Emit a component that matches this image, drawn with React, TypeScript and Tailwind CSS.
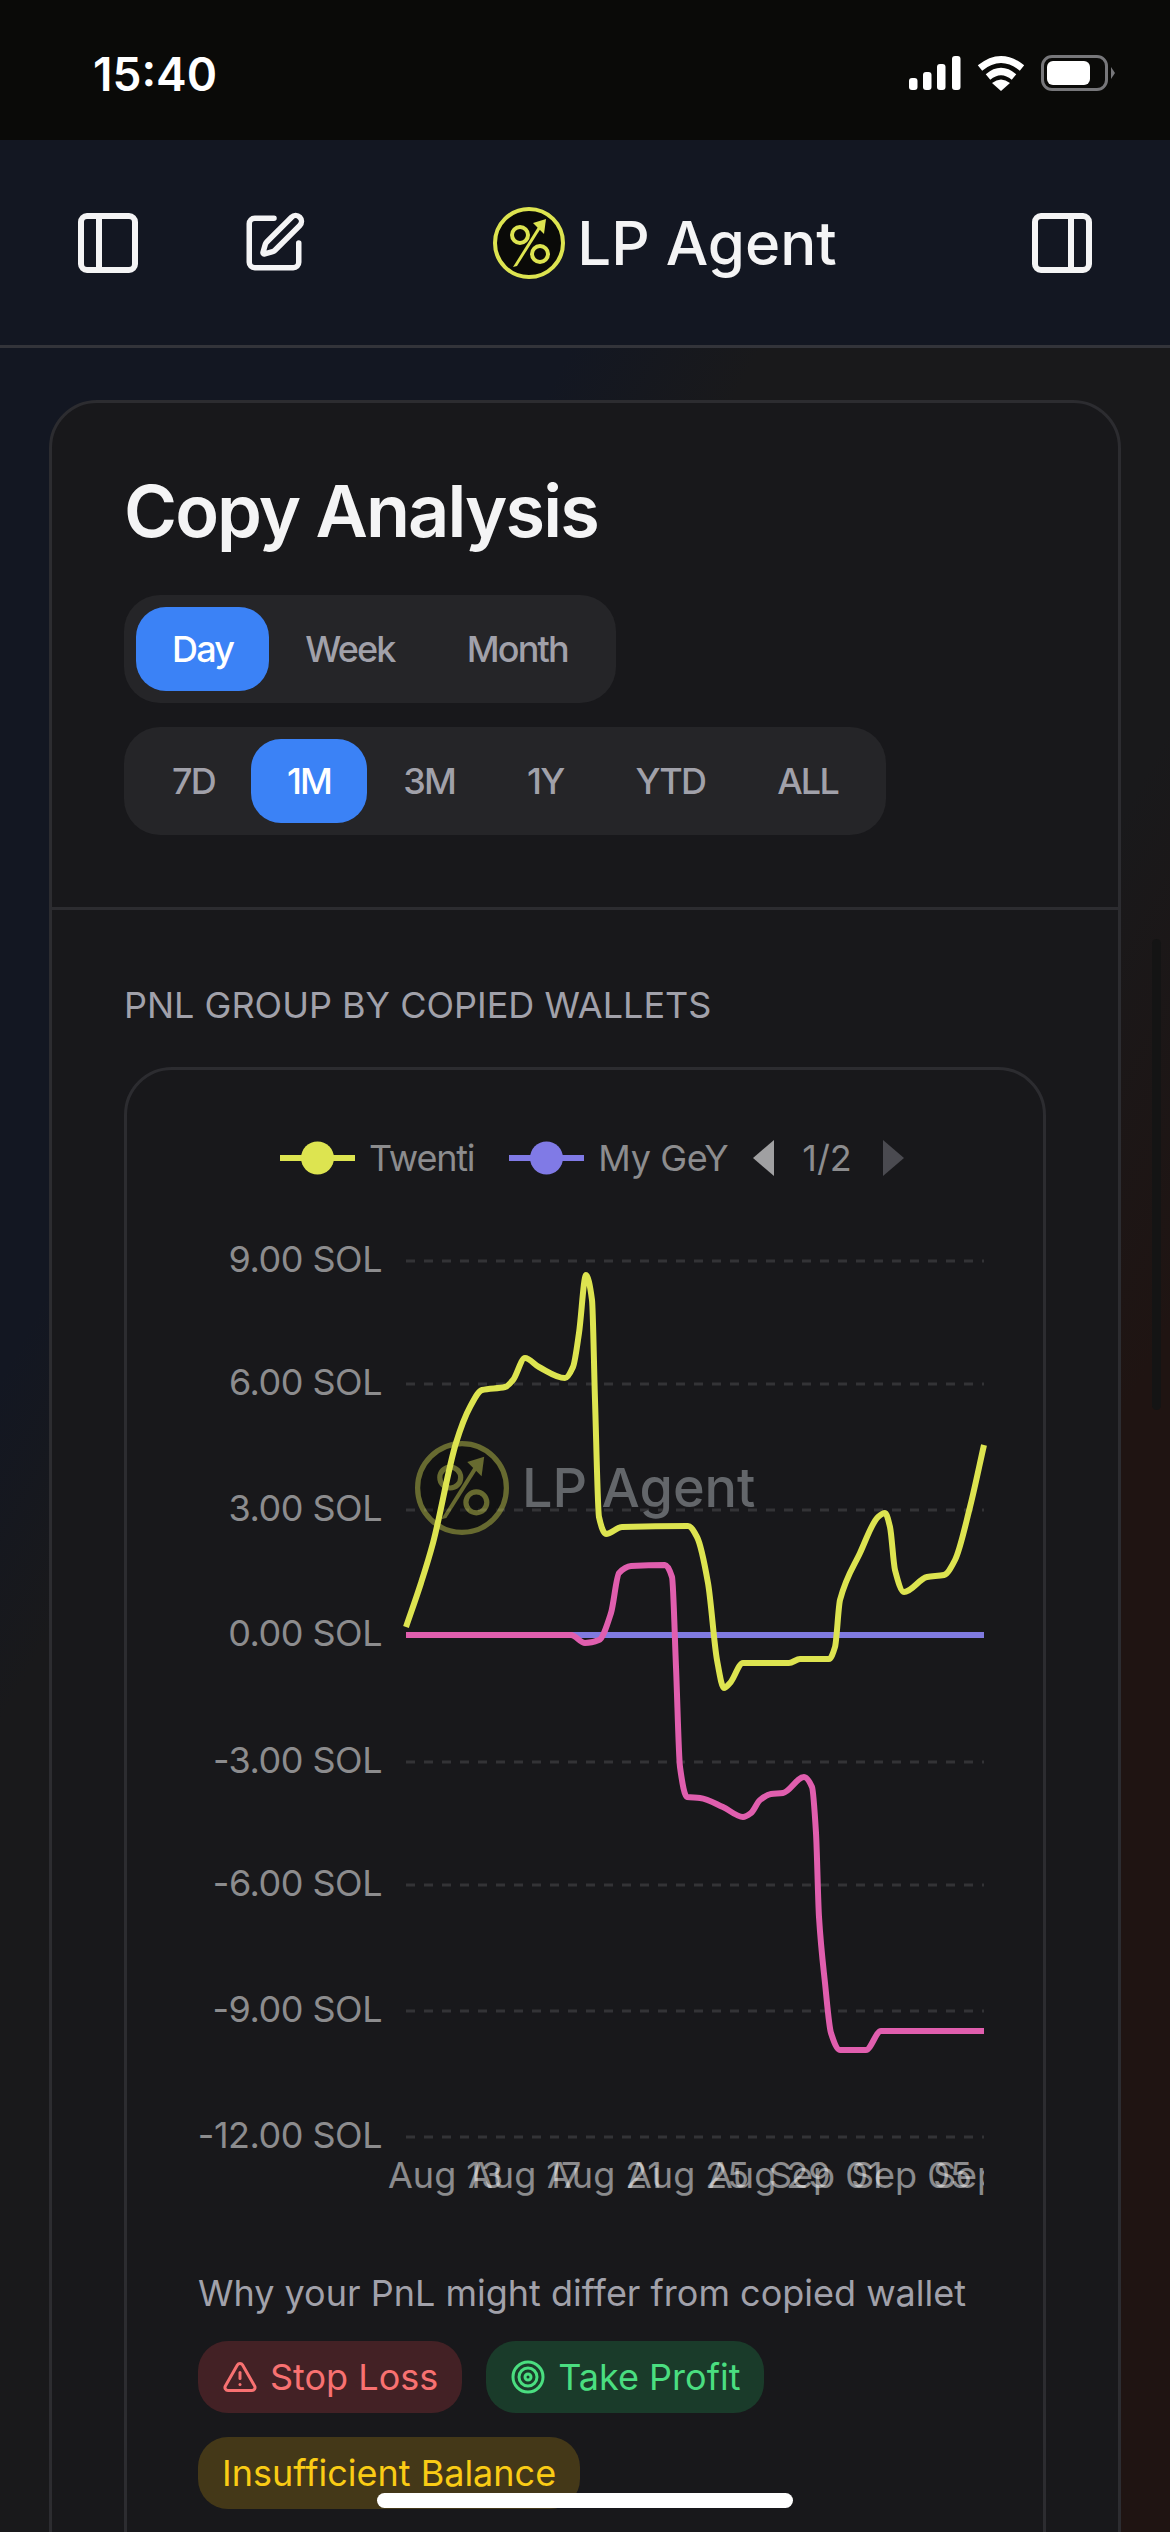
import { PanelLeft, PanelRight, SquarePen, Target, TriangleAlert } from "lucide-react";

type Pt = [number, number];

// chart coordinates are page pixels, the svg's viewBox starts where it sits in the page
const yellow: Pt[] = [
  [406, 1627], [421, 1583], [433, 1543], [456, 1443], [470, 1407], [482, 1390], [505, 1387], [513, 1380],
  [525, 1358], [539, 1367], [565, 1378], [573, 1367], [579, 1333], [586, 1275], [592, 1300], [595, 1400],
  [599, 1517], [606, 1534], [622, 1527], [688, 1526], [697, 1537], [708, 1583], [717, 1660], [724, 1688],
  [730, 1683], [743, 1663], [789, 1663], [800, 1659], [829, 1659], [835, 1647], [840, 1600], [860, 1553],
  [878, 1517], [885, 1513], [890, 1527], [895, 1570], [904, 1592], [927, 1577], [944, 1575], [955, 1560],
  [970, 1507], [984, 1445],
];

const pink: Pt[] = [
  [406, 1635], [571, 1635], [585, 1643], [599, 1640], [611, 1613], [619, 1573], [631, 1566], [665, 1565],
  [672, 1577], [676, 1667], [680, 1767], [687, 1797], [700, 1798], [723, 1807], [743, 1817], [751, 1813],
  [760, 1800], [771, 1794], [783, 1793], [804, 1777], [812, 1787], [816, 1833], [819, 1917], [825, 1983],
  [831, 2033], [840, 2050], [866, 2050], [881, 2031], [984, 2031],
];

// same idea as d3's curveMonotoneX
function monotonePath(p: Pt[]) {
  const n = p.length;
  const d: number[] = [];
  for (let i = 0; i < n - 1; i++) d.push((p[i + 1][1] - p[i][1]) / (p[i + 1][0] - p[i][0]));
  const m: number[] = [d[0]];
  for (let i = 1; i < n - 1; i++) {
    m.push(d[i - 1] * d[i] <= 0 ? 0 : (2 * d[i - 1] * d[i]) / (d[i - 1] + d[i]));
  }
  m.push(d[n - 2]);
  let out = `M${p[0][0]} ${p[0][1]}`;
  for (let i = 0; i < n - 1; i++) {
    const h = (p[i + 1][0] - p[i][0]) / 3;
    out += `C${p[i][0] + h} ${p[i][1] + m[i] * h} ${p[i + 1][0] - h} ${p[i + 1][1] - m[i + 1] * h} ${p[i + 1][0]} ${p[i + 1][1]}`;
  }
  return out;
}

const yTicks = [
  ["9.00 SOL", 1261], ["6.00 SOL", 1384], ["3.00 SOL", 1510], ["0.00 SOL", 1635],
  ["-3.00 SOL", 1762], ["-6.00 SOL", 1885], ["-9.00 SOL", 2011], ["-12.00 SOL", 2137],
] as const;

const xTicks = [
  ["Aug 13", 388], ["Aug 17", 468], ["Aug 21", 547], ["Aug 25", 627],
  ["Aug 29", 708], ["Sep 01", 769], ["Sep 05", 851], ["Sep 09", 933],
] as const;

const Logo = (props: React.SVGProps<SVGSVGElement>) => (
  <svg viewBox="0 0 72 72" fill="none" {...props}>
    <circle cx="36" cy="36" r="34" fill="#0a0a08" stroke="#dde450" strokeWidth="4" />
    <circle cx="27" cy="28" r="8" stroke="#dde450" strokeWidth="4" />
    <circle cx="47" cy="47" r="8" stroke="#dde450" strokeWidth="4" />
    <path d="M20 60 L24 59 L48 21 L45 20 Z" fill="#dde450" />
    <path d="M53 12 L40 16 L51 27 Z" fill="#dde450" />
  </svg>
);

const StatusBar = () => (
  <div className="h-[140px] shrink-0 bg-[#0a0a08] flex items-start justify-between pl-[93px] pr-[55px] pt-[50px]">
    <span className="text-[46px] leading-[48px] font-semibold text-white">15:40</span>
    <div className="flex items-center gap-[16px] mt-[5px]">
      <svg width="52" height="34" viewBox="0 0 52 34" fill="#fff">
        <rect x="0" y="22" width="8.5" height="12" rx="3" />
        <rect x="14" y="16" width="8.5" height="18" rx="3" />
        <rect x="28" y="8" width="8.5" height="26" rx="3" />
        <rect x="43" y="0" width="8.5" height="34" rx="3" />
      </svg>
      <svg width="48" height="36" viewBox="0 0 48 36" fill="none" stroke="#fff" strokeWidth="7">
        <path d="M3 13 Q24 -4 45 13" />
        <path d="M11 22 Q24 11 37 22" />
        <path d="M24 36 L15 28 Q24 21 33 28 Z" fill="#fff" stroke="none" />
      </svg>
      <div className="flex items-center gap-[3px]">
        <div className="w-[67px] h-[36px] rounded-[11px] border-[3px] border-[#77777a] p-[3px] pr-[15px]">
          <div className="w-full h-full rounded-[6px] bg-white" />
        </div>
        <svg width="4" height="12" viewBox="0 0 4 12" fill="#77777a">
          <path d="M0 0 L4 6 L0 12 Z" />
        </svg>
      </div>
    </div>
  </div>
);

const Header = () => (
  <header className="h-[208px] shrink-0 bg-[#131722] border-b-[3px] border-[#33343a] flex items-center justify-between px-[72px] text-[#f4f4f5]">
    <div className="flex items-center gap-[96px]">
      <PanelLeft size={72} strokeWidth={2} />
      <SquarePen size={66} strokeWidth={2} className="-translate-x-[-1px]" />
    </div>
    <div className="flex items-center gap-[12px] -ml-[2px]">
      <Logo width="72" height="72" />
      <span className="text-[60px] leading-[72px] font-medium">LP Agent</span>
    </div>
    <PanelRight size={72} strokeWidth={2} />
  </header>
);

const Tabs = ({ items, active }: { items: string[]; active: string }) => (
  <div className="flex w-fit p-[12px] rounded-[36px] bg-[#252528]">
    {items.map((t) => (
      <div
        key={t}
        className={
          t === active
            ? "h-[84px] px-[36px] flex items-center rounded-[30px] bg-[#3b82f6] text-white text-[36px] font-medium tracking-[-1.8px]"
            : "h-[84px] px-[36px] flex items-center text-[#a1a1aa] text-[36px] font-medium tracking-[-1.8px]"
        }
      >
        {t}
      </div>
    ))}
  </div>
);

const LegendMark = ({ color }: { color: string }) => (
  <svg width="75" height="40" viewBox="0 0 75 40">
    <rect x="0" y="17" width="75" height="6" fill={color} />
    <circle cx="37.5" cy="20" r="16.5" fill={color} />
  </svg>
);

const Legend = () => (
  <div className="h-[60px] mt-[58px] pl-[153px] flex items-center text-[36px] text-[#8c8c8e]">
    <LegendMark color="#dde450" />
    <span className="ml-[14px] tracking-[-1.2px]">Twenti</span>
    <span className="ml-[35px] flex"><LegendMark color="#807ae6" /></span>
    <span className="ml-[14px] tracking-[-0.4px]">My GeY</span>
    <svg className="ml-[25px]" width="21" height="36" viewBox="0 0 21 36" fill="#a0a0a2">
      <path d="M21 0 V36 L0 18 Z" />
    </svg>
    <span className="ml-[28px]">1/2</span>
    <svg className="ml-[31px]" width="21" height="36" viewBox="0 0 21 36" fill="#4a4a50">
      <path d="M0 0 V36 L21 18 Z" />
    </svg>
  </div>
);

const Chart = () => (
  <svg width="916" height="1022" viewBox="127 1188 916 1022" className="block" fontFamily="Inter, sans-serif" fontSize="36">
    <defs>
      <clipPath id="plot">
        <rect x="300" y="1188" width="684" height="1022" />
      </clipPath>
    </defs>
    {yTicks.map(([label, y]) => (
      <g key={label}>
        <line x1="406" x2="984" y1={y} y2={y} stroke="#333336" strokeWidth="3" strokeDasharray="9 9" />
        <text x="382" y={y + 11} textAnchor="end" fill="#8c8c8e" letterSpacing="-0.5">{label}</text>
      </g>
    ))}
    <Logo x="415" y="1441" width="94" height="94" opacity="0.4" />
    <text x="522" y="1507" fontSize="54" fontWeight="500" fill="#63666a">LP Agent</text>
    <line x1="406" x2="984" y1="1635" y2="1635" stroke="#807ae0" strokeWidth="6" />
    <path d={monotonePath(yellow)} fill="none" stroke="#dde450" strokeWidth="6" />
    <path d={monotonePath(pink)} fill="none" stroke="#e05eae" strokeWidth="6" />
    <g clipPath="url(#plot)">
      {xTicks.map(([label, x]) => (
        <text key={label} x={x} y="2188" fill="#ffffff" fillOpacity="0.5">{label}</text>
      ))}
    </g>
  </svg>
);

const Pill = ({ className, icon, children }: { className: string; icon?: React.ReactNode; children: string }) => (
  <div className={`h-[72px] px-[24px] flex items-center gap-[12px] rounded-[30px] text-[36px] ${className}`}>
    {icon}
    {children}
  </div>
);

export default function App() {
  return (
    <div className="relative w-[1170px] h-[2532px] overflow-hidden flex flex-col [font-family:Inter,sans-serif] bg-[#19191b]">
      <StatusBar />
      <Header />
      <main className="flex-1 min-h-0 px-[49px] pt-[52px] bg-[linear-gradient(119deg,#131722_0%,#131722_24%,#19191b_32%,#19191b_58%,#1f1412_72%,#1f1412_100%)]">
        <section className="bg-[#18181b] border-[3px] border-[#2c2c30] rounded-[48px]">
          <div className="px-[72px] pt-[60px] pb-[72px] border-b-[3px] border-[#2c2c30]">
            <h1 className="text-[72px] leading-[96px] font-semibold text-[#f4f4f5] tracking-[-1.9px] mb-[36px]">Copy Analysis</h1>
            <div className="flex flex-col gap-[24px]">
              <Tabs items={["Day", "Week", "Month"]} active="Day" />
              <Tabs items={["7D", "1M", "3M", "1Y", "YTD", "ALL"]} active="1M" />
            </div>
          </div>
          <div className="px-[72px] pt-[65px]">
            <h2 className="text-[36px] leading-[60px] text-[#a1a1aa] uppercase">PNL group by copied wallets</h2>
            <div className="mt-[32px] border-[3px] border-[#2c2c30] rounded-[48px] pb-[120px]">
              <Legend />
              <Chart />
              <p className="mt-[56px] pl-[71px] text-[36px] leading-[54px] text-[#a1a1aa]">Why your PnL might differ from copied wallet</p>
              <div className="mt-[21px] pl-[71px] flex flex-wrap gap-[24px] w-[700px]">
                <Pill className="bg-[#432125] text-[#f87171]" icon={<TriangleAlert size={36} strokeWidth={2} />}>Stop Loss</Pill>
                <Pill className="bg-[#1a3b2a] text-[#4ade80]" icon={<Target size={36} strokeWidth={2} />}>Take Profit</Pill>
                <Pill className="bg-[#443818] text-[#facc15]">Insufficient Balance</Pill>
              </div>
            </div>
          </div>
        </section>
      </main>
      {/* scrollbar and home indicator lie over the page */}
      <div className="absolute left-[1152px] top-[939px] w-[9px] h-[471px] rounded-full bg-[#141414]" />
      <div className="absolute left-[377px] top-[2493px] w-[416px] h-[15px] rounded-full bg-white" />
    </div>
  );
}
